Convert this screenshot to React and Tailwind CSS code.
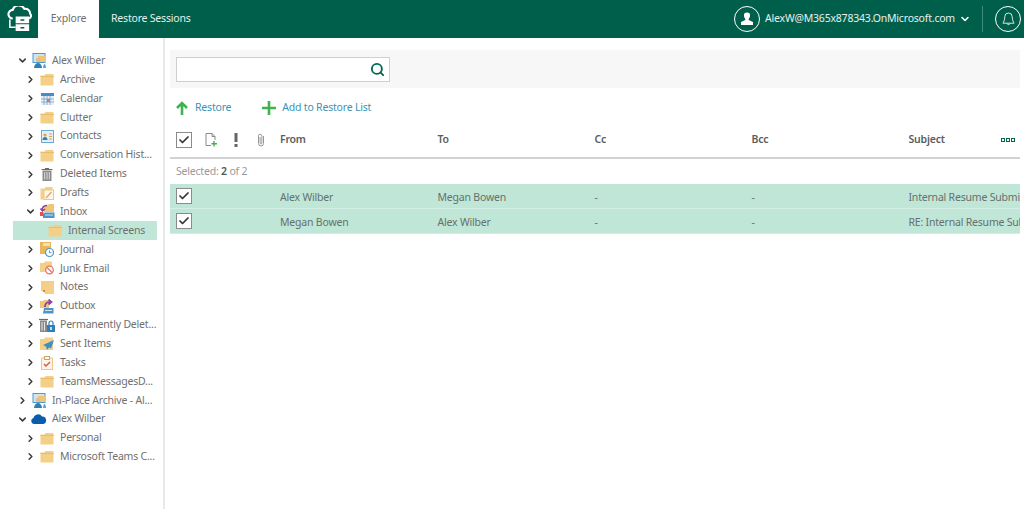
import React from "react";
import { ChevronRight, ChevronDown, Search, Check } from "lucide-react";

function Folder() {
    return (
        <svg viewBox="0 0 14 13" className="w-[14px] h-[13px]">
            <path d="M0.5 2.5h4l1-1.5h7.5a.5.5 0 0 1 .5.5V12.5H.5z" fill="#f3cf87" />
            <path d="M0.5 3.500H14" stroke="#e8bd6a" strokeWidth="1" />
        </svg>
    );
}

function IconMailbox() {
    return (
        <svg viewBox="0 0 15 15" className="w-[15px] h-[15px]">
            <rect x="1" y="0.5" width="12" height="9" fill="#cfe3f1" stroke="#4b9ccf" />
            <rect x="6" y="3" width="8" height="6" fill="#f0c674" />
            <circle cx="6" cy="7" r="2.200" fill="#e9b98f" />
            <path d="M2 15c0-3 2-5 4-5s4 2 4 5z" fill="#2f7fb8" />
            <path d="M11 15c0-2 .7-4 1.500-4s1.500 2 1.500 4z" fill="#5aa7d6" />
        </svg>
    );
}

function IconCalendar() {
    return (
        <svg viewBox="0 0 13 12" className="w-[13px] h-[12px]">
            <rect x="0" y="0" width="13" height="12" fill="#e6eef6" />
            <rect x="0" y="0" width="13" height="3" fill="#4a8ac6" />
            <path d="M3 3v9M6 3v9M9 3v9M0 6h13M0 9h13" stroke="#7d9fc4" strokeWidth="0.8" />
            <rect x="6" y="6" width="3" height="3" fill="#d9534f" opacity="0.7" />
        </svg>
    );
}

function IconContacts() {
    return (
        <svg viewBox="0 0 13 13" className="w-[13px] h-[13px]">
            <rect x="0.5" y="0.5" width="12" height="12" fill="#e4eff7" stroke="#6ea9d3" />
            <circle cx="4" cy="5" r="1.600" fill="#e3a33d" />
            <path d="M1.500 10c0-2 1-3 2.500-3s2.500 1 2.500 3z" fill="#2f7fb8" />
            <path d="M8 4h3M8 6.500h3M8 9h3" stroke="#e3a33d" strokeWidth="1.200" />
        </svg>
    );
}

function IconTrash() {
    return (
        <svg viewBox="0 0 12 14" className="w-[12px] h-[14px]">
            <path d="M4 1.500h4M0.500 2.500h11" stroke="#6b6b6b" strokeWidth="1.200" />
            <path d="M1.500 3.500h9V14h-9z" fill="#8a8a8a" />
            <path d="M3.700 5v7.500M6 5v7.500M8.300 5v7.500" stroke="#e8e8e8" strokeWidth="0.900" />
        </svg>
    );
}

function IconDrafts() {
    return (
        <svg viewBox="0 0 14 14" className="w-[14px] h-[14px]">
            <path d="M0.500 2.500h4l1-1.500h7v3H4.500v9.500h-4z" fill="#f3cf87" />
            <rect x="4" y="4" width="9.500" height="9.500" fill="#fdf6e7" stroke="#e9c88a" />
            <path d="M6 12l5.500-6" stroke="#e6a574" strokeWidth="1.300" />
        </svg>
    );
}

function IconInbox() {
    return (
        <svg viewBox="0 0 15 15" className="w-[15px] h-[15px]">
            <path d="M4 1h4l1-1h5v8H4z" fill="#f0c674" />
            <path d="M5 8.500h9.500V14H3V10z" fill="#4f93c9" />
            <path d="M5 11h8" stroke="#cfe3f1" strokeWidth="1" />
            <path d="M7 1.500A4 4 0 0 0 2.500 6.500M0.500 4.500l2 2.500 2.500-2" fill="none" stroke="#8a3ea8" strokeWidth="1.600" />
            <rect x="0" y="8" width="3.500" height="4" fill="#e0524d" />
        </svg>
    );
}

function IconJournal() {
    return (
        <svg viewBox="0 0 14 15" className="w-[14px] h-[15px]">
            <path d="M0 0h11v12H0z" fill="#e8b65c" />
            <path d="M3 1h7v3H3z" fill="#f6dfae" />
            <circle cx="9.500" cy="10.500" r="4" fill="#fff" stroke="#4b9ccf" strokeWidth="1.200" />
            <path d="M9.500 8.500v2.200h2" stroke="#4b9ccf" fill="none" />
        </svg>
    );
}

function IconJunk() {
    return (
        <svg viewBox="0 0 15 14" className="w-[15px] h-[14px]">
            <path d="M0 2h4l1-1.500h7V11H0z" fill="#f3cf87" />
            <circle cx="9.500" cy="9" r="3.800" fill="#fff" stroke="#e8736e" strokeWidth="1.300" />
            <path d="M7 6.500l5 5" stroke="#e8736e" strokeWidth="1.300" />
        </svg>
    );
}

function IconNotes() {
    return (
        <svg viewBox="0 0 13 13" className="w-[13px] h-[13px]">
            <path d="M0 0h13v13H4l-4-3z" fill="#f3cf87" />
            <path d="M0 10h3.500v3z" fill="#fff" />
            <rect x="2" y="9" width="2" height="2" fill="#c98f2c" />
        </svg>
    );
}

function IconOutbox() {
    return (
        <svg viewBox="0 0 14 15" className="w-[14px] h-[15px]">
            <path d="M0 2h3l1-1h5v8H0z" fill="#f0c674" />
            <path d="M4 9h9.500v5.500H3z" fill="#4f93c9" />
            <path d="M5 11.500h7" stroke="#cfe3f1" />
            <path d="M5 8c0-3 2-5 5-5M8.500 0.500L11.500 3 8.500 5.500" fill="none" stroke="#8a3ea8" strokeWidth="1.700" />
        </svg>
    );
}

function IconPermDelete() {
    return (
        <svg viewBox="0 0 16 14" className="w-[16px] h-[14px]">
            <path d="M0 1.500h9" stroke="#6b6b6b" strokeWidth="1.200" />
            <path d="M1 2.500h7V14H1z" fill="#8a8a8a" />
            <path d="M3 4v8.500M5.500 4v8.500" stroke="#e8e8e8" />
            <path d="M8 7h8v7H8z" fill="#2f7fb8" />
            <path d="M10 7V5a2 2 0 0 1 4 0v2" fill="none" stroke="#2f7fb8" strokeWidth="1.200" />
            <rect x="11.300" y="9" width="1.400" height="3" fill="#fff" />
        </svg>
    );
}

function IconSent() {
    return (
        <svg viewBox="0 0 14 13" className="w-[14px] h-[13px]">
            <path d="M0 2h4l1-1.500h8V13H0z" fill="#f3cf87" />
            <path d="M14 3L3 8l3 1.500L7 13l2-2.500 2 1z" fill="#3f8fc6" />
        </svg>
    );
}

function IconTasks() {
    return (
        <svg viewBox="0 0 12 14" className="w-[12px] h-[14px]">
            <rect x="0.500" y="2" width="11" height="11.500" fill="#fdf6e7" stroke="#e9c88a" />
            <rect x="3.500" y="0.500" width="5" height="3" fill="#fff" stroke="#c9a45e" />
            <path d="M3 8l2 2 4-4" fill="none" stroke="#d9534f" strokeWidth="1.400" />
        </svg>
    );
}

function IconCloud() {
    return (
        <svg viewBox="0 0 16 10" className="w-[16px] h-[10px]">
            <path d="M3 10a3 3 0 0 1-.5-5.900A4.600 4.600 0 0 1 11 2.600 3.800 3.800 0 0 1 12.500 10z" fill="#0b5cab" />
        </svg>
    );
}

const rows = [
    { level: 0, open: true, label: "Alex Wilber", icon: <IconMailbox /> },
    { level: 1, label: "Archive", icon: <Folder /> },
    { level: 1, label: "Calendar", icon: <IconCalendar /> },
    { level: 1, label: "Clutter", icon: <Folder /> },
    { level: 1, label: "Contacts", icon: <IconContacts /> },
    { level: 1, label: "Conversation Hist...", icon: <Folder /> },
    { level: 1, label: "Deleted Items", icon: <IconTrash /> },
    { level: 1, label: "Drafts", icon: <IconDrafts /> },
    { level: 1, open: true, label: "Inbox", icon: <IconInbox /> },
    { level: 2, leaf: true, selected: true, label: "Internal Screens", icon: <Folder /> },
    { level: 1, label: "Journal", icon: <IconJournal /> },
    { level: 1, label: "Junk Email", icon: <IconJunk /> },
    { level: 1, label: "Notes", icon: <IconNotes /> },
    { level: 1, label: "Outbox", icon: <IconOutbox /> },
    { level: 1, label: "Permanently Delet...", icon: <IconPermDelete /> },
    { level: 1, label: "Sent Items", icon: <IconSent /> },
    { level: 1, label: "Tasks", icon: <IconTasks /> },
    { level: 1, label: "TeamsMessagesD...", icon: <Folder /> },
    { level: 0, label: "In-Place Archive - Al...", icon: <IconMailbox /> },
    { level: 0, open: true, label: "Alex Wilber", icon: <IconCloud /> },
    { level: 1, label: "Personal", icon: <Folder /> },
    { level: 1, label: "Microsoft Teams C...", icon: <Folder /> },
];

function TreeRow({ row }) {
    if (row.selected) {
        return (
            <div className="flex items-center h-[18.86px] ml-[13px] bg-[#c0e6d8] pl-[34px] whitespace-nowrap">
                <span className="w-[16px] flex justify-center">{row.icon}</span>
                <span className="ml-[5px] text-[#707070]">{row.label}</span>
            </div>
        );
    }
    const Chevron = row.open ? ChevronDown : ChevronRight;
    return (
        <div
            className={[
                "flex items-center h-[18.86px] whitespace-nowrap",
                row.level === 0 ? "pl-[17px]" : "pl-[25px]",
            ].join(" ")}
        >
            <span className="w-[11px] flex justify-center shrink-0">
                <Chevron size={13} strokeWidth={3.2} className="text-[#3a3a3a]" />
            </span>
            <span className="w-[16px] ml-[3px] flex justify-center shrink-0">{row.icon}</span>
            <span className="ml-[5px] text-[#707070]">{row.label}</span>
        </div>
    );
}

function CheckBox() {
    return (
        <div className="w-4 h-4 shrink-0 bg-white border border-[#8a8a8a] flex items-center justify-center">
            <Check size={12} strokeWidth={3.5} className="text-[#333]" />
        </div>
    );
}

function MailRow({ from, to, subject }) {
    return (
        <div className="flex items-center h-[25px] bg-[#c0e6d8] border-b border-[#d3eee4] text-[#66706c] whitespace-nowrap">
            <div className="w-[110px] shrink-0 pl-[6px]"><CheckBox /></div>
            <div className="w-[157.5px] shrink-0 pt-[3px]">{from}</div>
            <div className="w-[157px] shrink-0 pt-[3px]">{to}</div>
            <div className="w-[157px] shrink-0 pt-[3px]">-</div>
            <div className="w-[157px] shrink-0 pt-[3px]">-</div>
            <div className="flex-1 min-w-0 overflow-hidden pt-[3px]">{subject}</div>
        </div>
    );
}

export default function App() {
    return (
        <div className="h-[509px] w-[1024px] overflow-hidden bg-white flex flex-col text-[10.5px] tracking-[-0.2px] font-['Noto_Sans',sans-serif]">
            <header className="h-[38px] shrink-0 bg-[#005f4b] flex items-center text-white">
                <div className="w-[38px] flex justify-center">
                    <svg viewBox="0 0 28 28" className="w-[27px] h-[27px]">
                        <path d="M7 13a4.500 4.500 0 0 1 0-9 6.500 6.500 0 0 1 12-1 5 5 0 0 1 6 5 3 3 0 0 1-1 5" fill="none" stroke="#fff" strokeWidth="2.200" />
                        <path d="M4 14v8h6" fill="none" stroke="#fff" strokeWidth="1.600" />
                        <path d="M10 11h14v7H10zM10 19h14v7H10z" fill="#fff" />
                        <path d="M15 14.500h4M15 22.500h4" stroke="#005f4b" strokeWidth="1.500" />
                    </svg>
                </div>
                <div className="w-[61px] h-full bg-white text-[#707070] flex items-center justify-center">Explore</div>
                <div className="ml-3 text-[#e6f0ed]">Restore Sessions</div>
                <div className="ml-auto flex items-center">
                    <div className="w-[26px] h-[26px] rounded-full border border-white flex items-center justify-center">
                        <svg viewBox="0 0 14 14" className="w-[14px] h-[14px]">
                            <path d="M7 0.500a3 3 0 0 1 3 3.300c0 1.400-.7 2.500-1.300 3.200v1l4.300 2V13H1v-3l4.300-2V7C4.700 6.300 4 5.200 4 3.800a3 3 0 0 1 3-3.300z" fill="#fff" />
                        </svg>
                    </div>
                    <div className="ml-[5px] text-[#e6f0ed]">AlexW@M365x878343.OnMicrosoft.com</div>
                    <ChevronDown size={12} strokeWidth={3} className="ml-[4px]" />
                    <div className="ml-[11px] w-px h-[26px] bg-[#3f8a78]" />
                    <div className="ml-[12px] mr-[3px] w-[26px] h-[26px] rounded-full border border-white flex items-center justify-center">
                        <svg viewBox="0 0 14 16" className="w-[13px] h-[15px]" fill="none" stroke="#fff" strokeWidth="0.900">
                            <path d="M7 1a4 4 0 0 1 4 4c0 4 1.500 6 2 7H1c.5-1 2-3 2-7a4 4 0 0 1 4-4zM5.500 12.500a1.600 1.600 0 0 0 3 0" />
                        </svg>
                    </div>
                </div>
            </header>

            <div className="flex-1 flex min-h-0">
                <aside className="w-[165px] shrink-0 border-r-2 border-[#e8e8e8] pt-[13.5px] pr-[6px]">
                    {rows.map((row, i) => (
                        <TreeRow key={i} row={row} />
                    ))}
                </aside>

                <main className="flex-1 min-w-0 ml-[5px] mr-1 pt-3">
                    <div className="h-[38px] bg-[#f7f7f7] flex items-center pl-[6px]">
                        <div className="w-[214px] h-[25px] bg-white border border-[#cfcfcf] flex items-center justify-end pr-[4px]">
                            <Search size={15} strokeWidth={3} className="text-[#00684f]" />
                        </div>
                    </div>

                    <div className="h-[38px] pt-[2px] flex items-center pl-[6px] text-[#3b93b5]">
                        <svg viewBox="0 0 12 14" className="w-[12px] h-[14px]" fill="none" stroke="#3fb34f" strokeWidth="2.600">
                            <path d="M6 14V2M1 7l5-5 5 5" />
                        </svg>
                        <span className="ml-[7px]">Restore</span>
                        <svg viewBox="0 0 14 14" className="w-[14px] h-[14px] ml-[31px]" fill="none" stroke="#3fb34f" strokeWidth="2.600">
                            <path d="M7 0v14M0 7h14" />
                        </svg>
                        <span className="ml-[6px]">Add to Restore List</span>
                    </div>

                    <div className="h-[33px] pb-[4px] flex items-center border-b-2 border-[#d2d2d2] text-[#5c5c5c] font-semibold whitespace-nowrap">
                        <div className="w-[110px] shrink-0 pl-[6px] flex items-center">
                            <CheckBox />
                            <svg viewBox="0 0 14 14" className="w-[14px] h-[14px] ml-[12px]" fill="none">
                                <path d="M2 .5h6l3 3V7M8 .5v3h3M2 .5v12h5" stroke="#8a8a8a" />
                                <path d="M10 8v5.500M7.500 10.700h5.500" stroke="#46b04a" strokeWidth="1.400" />
                            </svg>
                            <svg viewBox="0 0 4 14" className="w-[4px] h-[14px] ml-[16px]" fill="#666">
                                <path d="M0.500 0h3v9h-3zM0.500 11h3v3h-3z" />
                            </svg>
                            <svg viewBox="0 0 8 14" className="w-[8px] h-[14px] ml-[19px]" fill="none" stroke="#999">
                                <path d="M6.500 3v7.500a2.500 2.500 0 0 1-5 0V3a1.700 1.700 0 0 1 3.400 0v7a.9.9 0 0 1-1.800 0V4" />
                            </svg>
                        </div>
                        <div className="w-[157.5px] shrink-0">From</div>
                        <div className="w-[157px] shrink-0">To</div>
                        <div className="w-[157px] shrink-0">Cc</div>
                        <div className="w-[157px] shrink-0">Bcc</div>
                        <div className="flex-1 flex items-center justify-between pr-[5px]">
                            <span>Subject</span>
                            <span className="flex gap-px">
                                <span className="w-1 h-1 border border-[#00684f]" />
                                <span className="w-1 h-1 border border-[#00684f]" />
                                <span className="w-1 h-1 border border-[#00684f]" />
                            </span>
                        </div>
                    </div>

                    <div className="h-[25px] flex items-center pl-[6px] text-[#999]">
                        <span>Selected: <b className="font-semibold text-[#555]">2</b> of 2</span>
                    </div>

                    <div className="flex flex-col">
                        <MailRow from="Alex Wilber" to="Megan Bowen" subject="Internal Resume Submission" />
                        <MailRow from="Megan Bowen" to="Alex Wilber" subject="RE: Internal Resume Submission" />
                    </div>
                </main>
            </div>
        </div>
    );
}
